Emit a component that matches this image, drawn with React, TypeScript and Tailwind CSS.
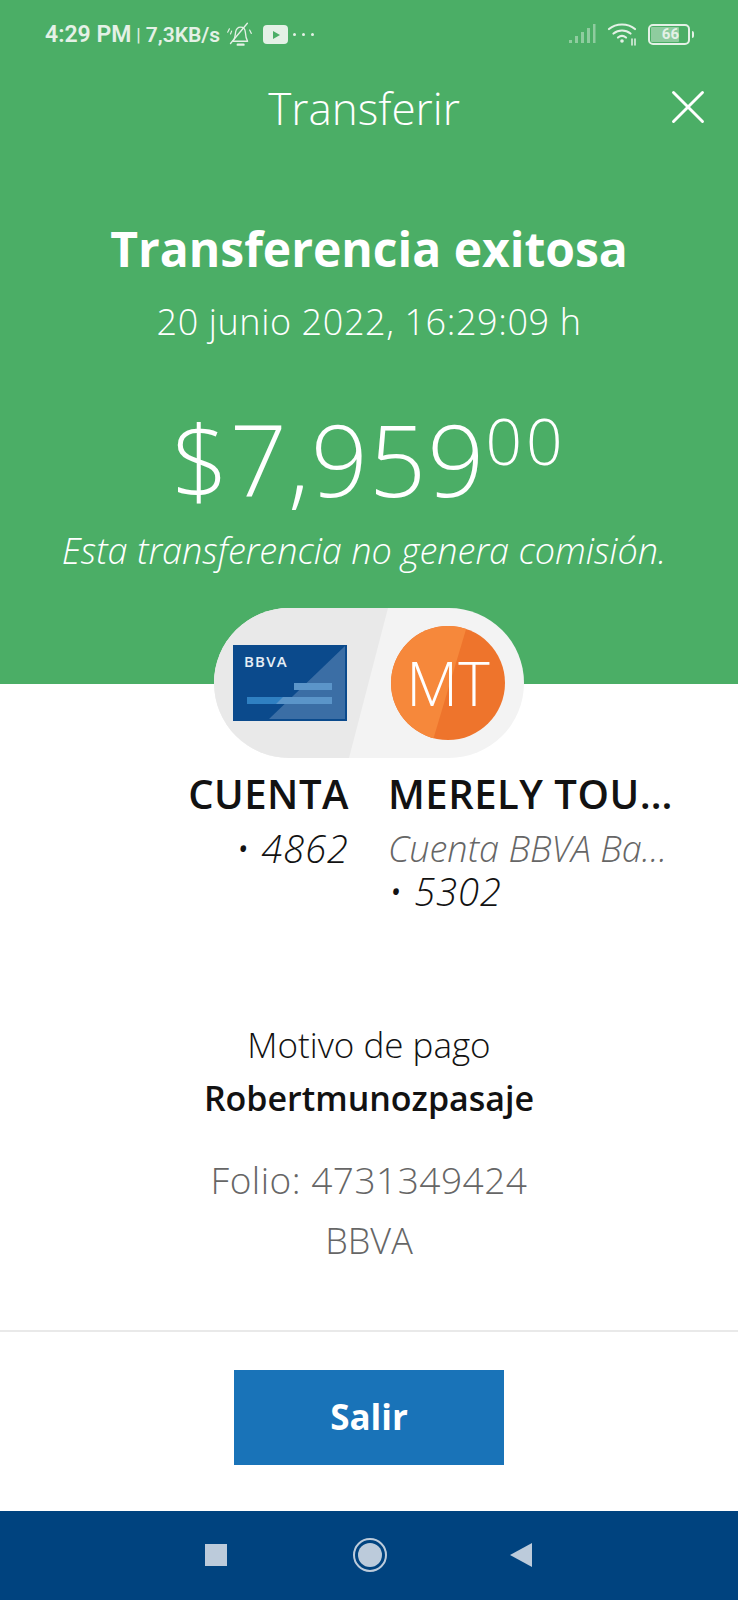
import { X } from 'lucide-react';

const font = { fontFamily: '"Open Sans", "Noto Sans", sans-serif' };

function BellOff() {
  return (
    <svg width="27" height="27" viewBox="0 0 24 24" fill="none" stroke="#e4f1e6" strokeWidth="1.200" strokeLinecap="round" strokeLinejoin="round">
      <path d="M6 18c2-2 2-4 2.500-8 .5-3 2.500-4.500 4.500-4.500s4 1.500 4.200 4.500c.2 3 .8 6 2 8z" />
      <path d="M10.500 21h5" strokeWidth="2.200" />
      <path d="M4 20 19 2" />
      <path d="M3 7 1.500 10M5 9l-1 2.500M21 8l1.500 3" strokeWidth="1" />
    </svg>
  );
}

function StatusBar() {
  return (
    <div className="flex h-[82px] items-start justify-between pl-[45px] pr-[44px] pt-[21px] text-[#e4f1e6]">
      <div className="flex items-center font-semibold leading-[26px]" style={{ fontFamily: 'Roboto, sans-serif' }}>
        <span className="text-[23px]">4:29 PM</span>
        <span className="mx-[5px] text-[18px] font-normal">|</span>
        <span className="text-[21px]">7,3KB/s</span>
        <span className="ml-[6px]">
          <BellOff />
        </span>
        <span className="ml-[10px] flex h-[19px] w-[25px] items-center justify-center rounded-[4px] bg-[#e4f1e6]">
          <svg width="8" height="8" viewBox="0 0 8 8">
            <path d="M1 0v8l7-4z" fill="#4bae66" />
          </svg>
        </span>
        <span className="ml-[5px] flex gap-[6px]">
          <span className="h-[3px] w-[3px] rounded-full bg-[#e4f1e6]" />
          <span className="h-[3px] w-[3px] rounded-full bg-[#e4f1e6]" />
          <span className="h-[3px] w-[3px] rounded-full bg-[#e4f1e6]" />
        </span>
      </div>
      <div className="flex items-center pt-[1px]">
        <svg width="28" height="20" viewBox="0 0 28 20" fill="#8fcc9f">
          <rect x="0" y="16" width="3" height="3" />
          <rect x="6" y="12" width="3" height="7" />
          <rect x="12" y="8" width="3" height="11" />
          <rect x="18" y="4" width="3" height="15" />
          <rect x="24" y="0" width="2.500" height="19" />
        </svg>
        <svg className="ml-[10px]" width="32" height="24" viewBox="0 0 32 24" fill="none" stroke="#e4f1e6" strokeWidth="2.200" strokeLinecap="round">
          <path d="M2 7c7-6 19-6 26 0" />
          <path d="M6.500 11.500c5-4 12-4 17 0" />
          <path d="M11 15.500c2.500-2 5.500-2 8 0" />
          <circle cx="15" cy="19" r="1.800" fill="#e4f1e6" stroke="none" />
          <path d="M25 17v6M28 17v6" strokeWidth="1.500" />
        </svg>
        <div className="ml-[9px] flex h-[21px] w-[42px] items-center rounded-[5px] border-2 border-[#e4f1e6] p-[1px]">
          <div className="flex h-full w-[28px] items-center justify-end rounded-[1px] bg-[#8fcc9f] text-[15px] font-bold leading-none text-[#e4f1e6]" style={{ fontFamily: 'Roboto, sans-serif' }}>
            66
          </div>
        </div>
        <div className="ml-[2px] h-[7px] w-[2px] rounded-r bg-[#e4f1e6]" />
      </div>
    </div>
  );
}

function AccountPill() {
  return (
    <div className="relative mx-auto -mt-[76px] h-[150px] w-[310px] overflow-hidden rounded-full bg-[#f3f3f3]">
      <svg className="absolute inset-0" width="310" height="150" viewBox="0 0 310 150">
        <path d="M0 0H174L135 150H0z" fill="#e9e9e9" />
      </svg>
      <div className="relative flex h-full items-center pl-[19px]">
        <svg width="114" height="76" viewBox="0 0 114 76">
          <rect width="114" height="76" fill="#0b4a8c" />
          <path d="M112 1V74H36z" fill="#3b6ea5" />
          <rect x="14" y="52" width="85" height="7" fill="#2f80c2" />
          <rect x="61" y="38" width="38" height="7" fill="#5b95c9" />
          <path d="M50 52H99V59H43z" fill="#5b95c9" />
        </svg>
        <div className="relative ml-[44px] flex h-[114px] w-[114px] items-center justify-center overflow-hidden rounded-full bg-[#ee742c] text-[60px] font-light text-[#fff]">
          <svg className="absolute inset-0" width="114" height="114" viewBox="0 0 114 114">
            <path d="M0 0H76L42 114H0z" fill="#f6883b" />
          </svg>
          <span className="relative leading-none">MT</span>
        </div>
      </div>
      <span className="absolute left-[30px] top-[46px] text-[15px] font-semibold leading-none tracking-[1.2px] text-[#e6eef6]">BBVA</span>
    </div>
  );
}

export default function App() {
  return (
    <div className="flex h-[1600px] w-[738px] flex-col overflow-hidden bg-white" style={font}>
      <div className="h-[684px] bg-[#4bae66] text-white">
        <StatusBar />
        <div className="relative pr-[10px] text-center text-[44px] font-light leading-[52px]">
          Transferir
          <X className="absolute right-[21px] -top-[4px]" size={58} strokeWidth={1.2} />
        </div>
        <h1 className="mt-[85px] text-center text-[48px] font-bold leading-[60px]">Transferencia exitosa</h1>
        <p className="mt-[22px] text-center text-[36px] font-light leading-[42px] tracking-[0.6px]">20 junio 2022, 16:29:09 h</p>
        <div className="mt-[65px] flex justify-center font-light leading-none">
          <span className="text-[100px] tracking-[1.2px]">$7,959</span>
          <span className="mt-[1px] text-[64px] tracking-[4px]">00</span>
        </div>
        <p className="mt-[22px] pr-[10px] text-center text-[36px] font-light italic leading-[42px]">Esta transferencia no genera comisión.</p>
      </div>

      <AccountPill />

      <div className="mt-[14px] flex text-[#121212]">
        <div className="w-[349px] shrink-0 pl-[167px] text-right">
          <div className="text-[40px] font-semibold leading-[44px] tracking-[0.5px]">CUENTA</div>
          <div className="mt-[11px] text-[38px] font-light italic leading-[43px] tracking-[1px]">• 4862</div>
        </div>
        <div className="ml-[39px] w-[288px]">
          <div className="truncate text-[40px] font-semibold leading-[44px] tracking-[0.5px]">MERELY TOUR ESPECIAL</div>
          <div className="mt-[11px] truncate text-[36px] font-light italic leading-[43px] text-[#666]">Cuenta BBVA Bancomer</div>
          <div className="text-[38px] font-light italic leading-[43px] tracking-[1px]">• 5302</div>
        </div>
      </div>

      <div className="mt-[111px] text-center">
        <div className="text-[35px] font-light leading-[42px] text-[#121212]">Motivo de pago</div>
        <div className="mt-[11px] text-[34px] font-semibold leading-[42px] text-[#121212]">Robertmunozpasaje</div>
        <div className="mt-[40px] text-[37px] font-light leading-[42px] tracking-[0.5px] text-[#666]">Folio: 4731349424</div>
        <div className="mt-[19px] text-[36px] font-light leading-[42px] text-[#666]">BBVA</div>
      </div>

      <div className="mt-[68px] h-[2px] bg-[#e9e9e9]" />

      <div className="flex flex-1 justify-center pt-[38px]">
        <button className="h-[95px] w-[270px] bg-[#1973b8] text-[35px] font-bold text-white">Salir</button>
      </div>

      <div className="flex h-[89px] items-center justify-center bg-[#00437f] pb-[1px] pr-[2px]">
        <div className="h-[22px] w-[22px] bg-[#bccbdb]" />
        <div className="ml-[126px] flex h-[34px] w-[34px] items-center justify-center rounded-full border-2 border-[#bccbdb]">
          <div className="h-[24px] w-[24px] rounded-full bg-[#bccbdb]" />
        </div>
        <svg className="ml-[123px]" width="22" height="24" viewBox="0 0 22 24">
          <path d="M0 12 22 0v24z" fill="#bccbdb" />
        </svg>
      </div>
    </div>
  );
}
